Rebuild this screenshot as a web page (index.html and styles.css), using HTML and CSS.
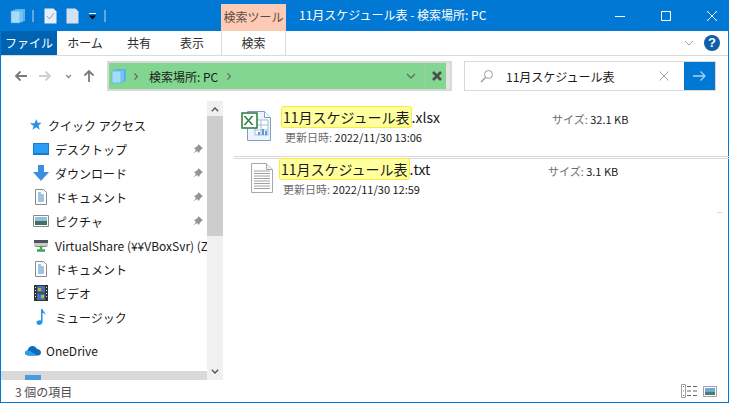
FILE: index.html
```html
<!DOCTYPE html>
<html lang="ja">
<head>
<meta charset="utf-8">
<title>11月スケジュール表 - 検索場所: PC</title>
<link rel="stylesheet" href="styles.css">
</head>
<body>
<div class="window">
  <header class="titlebar">
    <div class="qat">
      <svg class="i16" viewBox="0 0 16 16"><path d="M5 1h10v12H5z" fill="#5cb4ee"/><path d="M3 2h10v12H3z" fill="#7cc8f5" stroke="#4aa3e0" stroke-width=".5"/><path d="M1 3h9v12H1z" fill="#a4dcfa" stroke="#4aa3e0" stroke-width=".5"/></svg>
      <span class="qsep"></span>
      <svg class="i16 qdoc" viewBox="0 0 13 16"><path d="M.5.5h9l3 3v12H.5z" fill="#e6eef8"/><path d="M3 8l2.500 3 4.500-6" fill="none" stroke="#8ba2bd" stroke-width="1"/></svg>
      <svg class="i16 qdoc2" viewBox="0 0 13 16"><path d="M.5.5h9l3 3v12H.5z" fill="#d4e1f2"/></svg>
      <svg class="qdrop" viewBox="0 0 7 7"><path d="M0 0h7v1H0z" fill="#fff"/><path d="M0 2.500h7L3.500 6.500z" fill="#000"/></svg>
      <span class="qsep"></span>
    </div>
    <div class="ctx-label">検索ツール</div>
    <div class="title">11月スケジュール表 - 検索場所: PC</div>
    <div class="winbtns">
      <svg viewBox="0 0 12 12"><path d="M1 6.500h10" stroke="#fff"/></svg>
      <svg viewBox="0 0 12 12"><path d="M1.500 1.500h9v9h-9z" fill="none" stroke="#fff"/></svg>
      <svg viewBox="0 0 12 12"><path d="M1 1l10 10M11 1L1 11" stroke="#fff"/></svg>
    </div>
  </header>

  <nav class="ribbon">
    <div class="tab tab-file">ファイル</div>
    <div class="tab tab-home">ホーム</div>
    <div class="tab tab-share">共有</div>
    <div class="tab tab-view">表示</div>
    <div class="tab tab-search">検索</div>
    <div class="ribbon-right">
      <svg class="collapse" viewBox="0 0 10 6"><path d="M1 1l4 4 4-4" fill="none" stroke="#a0a0a0" stroke-width="1"/></svg>
      <span class="help">?</span>
    </div>
  </nav>

  <div class="addr-row">
    <div class="navs">
      <svg class="nav-a" viewBox="0 0 14 12"><path d="M13 6H2M6.500 1.500L2 6l4.500 4.500" fill="none" stroke="#7a7a7a" stroke-width="1.800"/></svg>
      <svg class="nav-a" viewBox="0 0 14 12"><path d="M1 6h11M7.500 1.500L12 6l-4.500 4.500" fill="none" stroke="#cfcfcf" stroke-width="1.800"/></svg>
      <svg class="nav-d" viewBox="0 0 7 5"><path d="M1 1l2.500 2.500L6 1" fill="none" stroke="#888" stroke-width="1.300"/></svg>
      <svg class="nav-u" viewBox="0 0 12 14"><path d="M6 13V2M1.500 6.500L6 2l4.500 4.500" fill="none" stroke="#7a7a7a" stroke-width="1.800"/></svg>
    </div>
    <div class="addr">
      <svg class="i16" viewBox="0 0 16 16"><path d="M5 1h10v12H5z" fill="#5cb4ee"/><path d="M3 2h10v12H3z" fill="#7cc8f5" stroke="#4aa3e0" stroke-width=".5"/><path d="M1 3h9v12H1z" fill="#a4dcfa" stroke="#4aa3e0" stroke-width=".5"/></svg>
      <svg class="chev" viewBox="0 0 4 7"><path d="M.5.500l3 3-3 3" fill="none" stroke="#666" stroke-width="1.200"/></svg>
      <span class="addr-text">検索場所: PC</span>
      <svg class="chev" viewBox="0 0 4 7"><path d="M.5.500l3 3-3 3" fill="none" stroke="#666" stroke-width="1.200"/></svg>
      <span class="spacer"></span>
      <svg class="addr-down" viewBox="0 0 10 6"><path d="M1 1l4 4 4-4" fill="none" stroke="#5f6f62" stroke-width="1.300"/></svg>
      <span class="addr-div"></span>
      <svg class="addr-x" viewBox="0 0 12 12"><path d="M2 2l8 8M10 2l-8 8" stroke="#4d4d4d" stroke-width="2.600"/></svg>
      <span class="addr-end"></span>
    </div>
    <div class="search">
      <svg class="s-icon" viewBox="0 0 14 14"><circle cx="8.500" cy="5.500" r="4" fill="none" stroke="#999"/><path d="M5.500 8.500L1 13" stroke="#b08a70" stroke-width="1.200"/></svg>
      <span class="s-text">11月スケジュール表</span>
      <span class="spacer"></span>
      <svg class="s-x" viewBox="0 0 10 10"><path d="M.5.500l9 9M9.500.5l-9 9" stroke="#a7a3ad"/></svg>
      <span class="s-go"><svg viewBox="0 0 14 12"><path d="M0 6h12M7.500 1.500L12 6l-4.500 4.500" fill="none" stroke="#a8d3f2" stroke-width="1.300"/></svg></span>
    </div>
  </div>

  <main class="body">
    <aside class="side">
      <div class="tree">
        <div class="node head"><svg class="star" viewBox="0 0 16 16"><path d="M9.500 1l1.500 4.500H15.500l-3.500 3 1.500 5-4-3-4.500 3 1.500-4.500L2 6h5.500z" fill="#2f8fe0"/></svg>クイック アクセス</div>
        <div class="node"><svg class="ni" viewBox="0 0 16 12"><path d="M0 0h16v12H0z" fill="#0f7fd8"/><path d="M1 1h14v9H1z" fill="#2a9cf2"/></svg><span class="nt">デスクトップ</span><svg class="pin" viewBox="0 0 10 10"><path d="M5.500 0L10 4.500 8.500 5 6.500 7.500 6 9 1 4 2.500 3.500 5 1.500zM3 6L.5 9.500 4 7z" fill="#8d959b"/></svg></div>
        <div class="node"><svg class="ni" viewBox="0 0 16 16"><path d="M5 0h6v7h5l-8 9-8-9h5z" fill="#3a8fe0"/></svg><span class="nt">ダウンロード</span><svg class="pin" viewBox="0 0 10 10"><path d="M5.500 0L10 4.500 8.500 5 6.500 7.500 6 9 1 4 2.500 3.500 5 1.500zM3 6L.5 9.500 4 7z" fill="#8d959b"/></svg></div>
        <div class="node"><svg class="ni" viewBox="0 0 16 16"><path d="M2.500.5h8l3 3v12h-11z" fill="#fff" stroke="#8a8a8a"/><path d="M5 4h3M5 6h6M5 8h6M5 10h6M5 12h6" stroke="#3f87c8"/></svg><span class="nt">ドキュメント</span><svg class="pin" viewBox="0 0 10 10"><path d="M5.500 0L10 4.500 8.500 5 6.500 7.500 6 9 1 4 2.500 3.500 5 1.500zM3 6L.5 9.500 4 7z" fill="#8d959b"/></svg></div>
        <div class="node"><svg class="ni" viewBox="0 0 16 12"><path d="M.5.5h15v11H.5z" fill="#fff" stroke="#8a8a8a"/><path d="M2 2h12v4H2z" fill="#8cc0ea"/><path d="M2 6h12v4H2z" fill="#46705c"/></svg><span class="nt">ピクチャ</span><svg class="pin" viewBox="0 0 10 10"><path d="M5.500 0L10 4.500 8.500 5 6.500 7.500 6 9 1 4 2.500 3.500 5 1.500zM3 6L.5 9.500 4 7z" fill="#8d959b"/></svg></div>
        <div class="node"><svg class="ni" viewBox="0 0 16 14"><path d="M1 2h14v6H1z" fill="#c9c9c9"/><path d="M1 2h14v3H1z" fill="#4e5359"/><path d="M2 8.500h12" stroke="#888"/><path d="M8 8v3M4 12.500h8" stroke="#35a64a" stroke-width="2.500"/></svg><span class="nt">VirtualShare (¥¥VBoxSvr) (Z:)</span></div>
        <div class="node"><svg class="ni" viewBox="0 0 16 16"><path d="M2.500.5h8l3 3v12h-11z" fill="#fff" stroke="#8a8a8a"/><path d="M5 4h3M5 6h6M5 8h6M5 10h6M5 12h6" stroke="#3f87c8"/></svg><span class="nt">ドキュメント</span></div>
        <div class="node"><svg class="ni" viewBox="0 0 16 16"><path d="M1 0h14v16H1z" fill="#333"/><path d="M4 1h8v6.500H4zM4 8.500h8V15H4z" fill="#3d72b8"/><path d="M5 3h3v3H5zM8 10h3v3H8z" fill="#c9b23a"/><path d="M2 2h1v1H2zM2 5h1v1H2zM2 8h1v1H2zM2 11h1v1H2zM13 2h1v1h-1zM13 5h1v1h-1zM13 8h1v1h-1zM13 11h1v1h-1z" fill="#ddd"/></svg><span class="nt">ビデオ</span></div>
        <div class="node"><svg class="ni" viewBox="0 0 16 16"><path d="M8 0h1.500c.3 2.500 3 3 3 6-1-1.500-2-2-3-2v9c0 2-2 3-3.500 3S3.500 15 3.500 13.500 5.500 11 8 11.500z" fill="#1e96e8"/></svg><span class="nt">ミュージック</span></div>
        <div class="node head od"><svg class="cloud" viewBox="0 0 16 11"><path d="M3.500 10.500C1.500 10.500 0 9.500 0 8s1-2.500 2.500-2.500C3 3 5 1 7.500 1c2 0 3.500 1 4.500 3 2 0 4 1.500 4 3.500s-1.500 3-3 3z" fill="#0f6cbd"/><path d="M3.500 10.500C1.500 10.500 0 9.500 0 8s1.500-2.500 3-2.500c2 0 3 1 5 2.500l5 2.500z" fill="#2f9be6"/></svg>OneDrive</div>
        <div class="node head pc"><svg class="ni" viewBox="0 0 16 12"><path d="M0 0h16v12H0z" fill="#4a9be0"/></svg>PC</div>
      </div>
      <div class="vscroll">
        <svg class="sb-btn" viewBox="0 0 8 5"><path d="M.8 4.200L4 1l3.200 3.200" fill="none" stroke="#505050" stroke-width="1.300"/></svg>
        <div class="sb-thumb"></div>
        <div class="sb-track"></div>
        <svg class="sb-btn" viewBox="0 0 8 5"><path d="M.8.800L4 4 7.200.8" fill="none" stroke="#505050" stroke-width="1.300"/></svg>
      </div>
    </aside>

    <section class="results">
      <article class="item item-a">
        <svg class="file-i" viewBox="0 0 32 32"><path d="M6.500 1.500h17l6 6v23h-23z" fill="#eef4fb" stroke="#7f9fc4"/><path d="M23.500 1.500v6h6" fill="#fff" stroke="#7f9fc4"/><path d="M14 10h13v15H14z" fill="#fff" stroke="#9cbde0"/><path d="M14 15h13M14 20h13M20 10v15" stroke="#9cbde0"/><path d="M17 25v-3h2v3zM21 25v-6h2v6zM24 25v-4h2v4z" fill="#5f98d3"/><path d="M1 3h15v15H1z" fill="#fff" stroke="#2b7a3d" stroke-width="1.500"/><path d="M4.500 6l3 3.500 3-3.500h2L8.500 10.500l4 4.500h-2l-3-3.500-3 3.500h-2l4-4.500-4-4.500z" fill="#21803a"/></svg>
        <div class="file-main">
          <div class="fname"><mark>11月スケジュール表</mark>.xlsx</div>
          <div class="fmeta"><span class="lab">更新日時:</span> 2022/11/30 13:06</div>
        </div>
        <div class="fsize"><span class="lab">サイズ:</span> 32.1 KB</div>
      </article>
      <div class="rule rule-a"></div>
      <div class="rule rule-b"></div>
      <article class="item item-b">
        <svg class="file-i" viewBox="0 0 32 32"><path d="M5.500 1.500h15l6 6v23h-21z" fill="#fff" stroke="#a8a8a8"/><path d="M20.500 1.500v6h6" fill="#f0f0f0" stroke="#a8a8a8"/><path d="M8 9h16M8 11.500h16M8 14h16M8 16.500h16M8 19h16M8 21.500h16M8 24h16M8 26.500h16" stroke="#a0a0a0"/></svg>
        <div class="file-main">
          <div class="fname"><mark>11月スケジュール表</mark>.txt</div>
          <div class="fmeta"><span class="lab">更新日時:</span> 2022/11/30 12:59</div>
        </div>
        <div class="fsize"><span class="lab">サイズ:</span> 3.1 KB</div>
      </article>
      <div class="tick"></div>
    </section>
  </main>

  <footer class="status">
    <span>3 個の項目</span>
    <span class="spacer"></span>
    <svg class="view-d" viewBox="0 0 16 14"><path d="M.5.500h4v13h-4z" fill="#fff" stroke="#a0a0a0"/><path d="M2 2h1v1H2z" fill="#555"/><path d="M2 6.500h1v1H2z" fill="#2a9cf2"/><path d="M2 11h1v1H2z" fill="#d33"/><path d="M6 2.500h4M12 2.500h4M6 7h4M12 7h4M6 11.500h4M12 11.500h4" stroke="#666"/></svg>
    <svg class="view-t" viewBox="0 0 14 11"><path d="M.5.500h13v10H.5z" fill="#fff" stroke="#a0a0a0"/><path d="M2 2h10v4H2z" fill="#6ba8dc"/><path d="M2 6h10v3H2z" fill="#4f7a6c"/></svg>
  </footer>
</div>
</body>
</html>
```
FILE: styles.css
```css
* { box-sizing: border-box; }
html, body { margin: 0; padding: 0; }
body { width: 729px; height: 403px; overflow: hidden; background: #fff; font-family: "Noto Sans CJK JP", "Noto Sans", sans-serif; font-size: 12px; color: #1a1a1a; }
svg { display: block; flex: none; }
.window { width: 729px; height: 403px; display: flex; flex-direction: column; border: 1px solid #0078d4; border-top: 0; }
.spacer { flex: 1; }
.i16 { width: 16px; height: 16px; }

.titlebar { height: 31px; flex: none; background: #0078d4; display: flex; margin: 0 -1px; position: relative; }
.qat { display: flex; align-items: center; width: 221px; padding-left: 10px; padding-top: 1px; }
.qat .i16 { margin-right: 0; }
.qsep { width: 2px; height: 12px; background: #5ea8e4; margin-left: 6px; }
.qdoc { width: 13px; margin-left: 10px; }
.qdoc2 { width: 13px; margin-left: 9px; }
.qdrop { width: 7px; height: 7px; margin-left: 10px; }
.qat .qsep:last-child { margin-left: 8px; }
.ctx-label { width: 65px; height: 27px; margin-top: 4px; background: #fdcbb5; color: #5a4a44; text-align: center; line-height: 26px; font-size: 12px; }
.title { color: #fff; font-size: 12px; margin-left: 13px; line-height: 30px; }
.winbtns { margin-left: auto; display: flex; align-items: center; padding-right: 11px; gap: 34px; padding-top: 0; }
.winbtns svg { width: 12px; height: 12px; }

.ribbon { height: 25px; flex: none; display: flex; border-bottom: 1px solid #dadbdc; }
.tab { height: 24px; line-height: 23px; text-align: center; color: #2b2b2b; }
.tab-file { width: 56px; background: #0063b1; color: #fff; }
.tab-home { width: 56px; }
.tab-share { width: 52px; }
.tab-view { width: 54px; }
.tab-search { width: 65px; margin-left: 2px; border-left: 1px solid #dadbdc; border-right: 1px solid #dadbdc; height: 17px; line-height: 17px; margin-top: 0; padding-top: 3px; height: 24px; }
.ribbon-right { margin-left: auto; display: flex; align-items: center; gap: 10px; padding-right: 8px; }
.collapse { width: 10px; height: 6px; }
.help { width: 16px; height: 16px; border-radius: 50%; background: #0e5fa8; color: #fff; font: bold 13px/16px "Liberation Sans", sans-serif; text-align: center; }

.addr-row { height: 45px; flex: none; display: flex; padding-top: 5px; align-items: flex-start; }
.navs { width: 106px; height: 30px; display: flex; align-items: center; padding-left: 13px; }
.nav-a { width: 14px; height: 12px; margin-right: 10px; }
.nav-d { width: 7px; height: 5px; margin-left: 3px; margin-right: 11px; }
.nav-u { width: 12px; height: 14px; }
.addr { width: 345px; height: 30px; background: #83d68f; border: 2px solid #d9d9d9; display: flex; align-items: center; padding-left: 2px; }
.chev { width: 4px; height: 7px; margin-left: 7px; }
.addr-text { margin-left: 11px; margin-right: 2px; color: #1a1a1a; }
.addr-down { width: 10px; height: 6px; margin-right: 9px; }
.addr-div { width: 1px; height: 26px; background: #a9c9ae; margin-right: 5px; }
.addr-x { width: 12px; height: 12px; margin-right: 3px; }
.addr-end { width: 4px; height: 26px; background: #e4e4e4; }
.search { width: 252px; height: 30px; margin-left: 12px; border: 1px solid #d9d9d9; display: flex; align-items: center; }
.s-icon { width: 14px; height: 14px; margin-left: 15px; }
.s-text { margin-left: 12px; }
.s-x { width: 10px; height: 10px; margin-right: 15px; }
.s-go { width: 31px; height: 28px; background: #0078d4; display: flex; align-items: center; justify-content: center; }
.s-go svg { width: 14px; height: 12px; }

.body { flex: 1; min-height: 0; display: flex; }
.side { width: 222px; flex: none; display: flex; overflow: hidden; }
.tree { width: 206px; flex: none; padding-top: 12px; }
.node { height: 24px; display: flex; align-items: center; padding-left: 32px; white-space: nowrap; }
.node .ni { width: 16px; height: 16px; margin-right: 6px; }
.node svg.ni[viewBox="0 0 16 12"] { height: 12px; }
.nt { flex: 1; }
.pin { width: 10px; height: 10px; margin-right: 4px; }
.head { padding-left: 27px; }
.star { width: 14px; height: 14px; margin-right: 6px; }
.od { margin-top: 9px; padding-left: 24px; }
.cloud { width: 16px; height: 11px; margin-right: 5px; }
.pc { margin-top: 9px; background: #d9d9d9; padding-left: 24px; align-items: flex-start; padding-top: 4px; }
.vscroll { width: 16px; flex: none; background: #f0f0f0; display: flex; flex-direction: column; align-items: center; }
.sb-btn { width: 8px; height: 5px; margin: 6px 0; }
.sb-thumb { width: 16px; height: 120px; background: #cdcdcd; margin-top: -2px; }
.sb-track { flex: 1; }

.results { flex: 1; min-width: 0; position: relative; padding-top: 7px; padding-left: 18px; }
.item { display: flex; }
.file-i { width: 32px; height: 32px; margin-top: 2px; }
.item-a { height: 48px; padding-left: 0; }
.item-b { height: 48px; padding-left: 5px; margin-left: 0; }
.file-main { width: 270px; margin-left: 9px; }
.item-b .file-main { width: 268px; margin-left: 2px; }
.fname { font-size: 14px; line-height: 19px; height: 19px; color: #1a1a1a; white-space: nowrap; }
mark { background: #ffff9e; color: inherit; border: 1px solid #f5ee3a; border-radius: 3px; margin-left: -1px; padding: 0 1px; }
.fmeta { font-size: 11px; line-height: 17px; margin-top: 2px; color: #1a1a1a; padding-left: 3px; }
.lab { color: #6d6d6d; }
.fsize { font-size: 11px; line-height: 17px; margin-top: 3px; white-space: nowrap; }
.rule { height: 1px; background: #d9d9d9; }
.rule-a { margin: 0 0 1px -7px; width: 507px; }
.rule-b { margin: 0 0 1px -7px; width: 506px; }
.tick { width: 5px; height: 1px; background: #d9d9d9; margin: 4px 0 0 476px; }

.status { height: 22px; flex: none; display: flex; align-items: center; padding: 0 11px 0 14px; color: #4d4d4d; font-size: 12px; }
.view-d { width: 16px; height: 14px; margin-right: 6px; }
.view-t { width: 14px; height: 11px; }
```
